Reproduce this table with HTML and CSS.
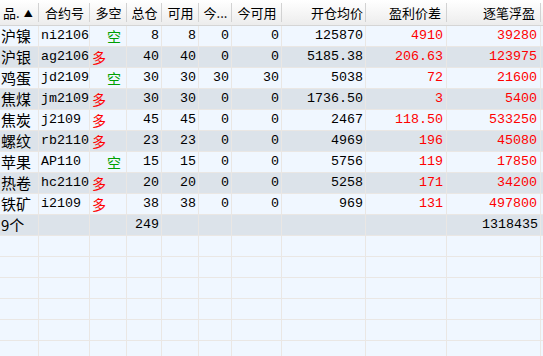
FILE: index.html
```html
<!DOCTYPE html>
<html lang="zh">
<head>
<meta charset="utf-8">
<link rel="stylesheet" href="styles.css">
</head>
<body>
<div class="grid">
  <div class="row head">
    <div class="h left">品.<span class="arrow">▲</span></div>
    <div class="h">合约号</div>
    <div class="h">多空</div>
    <div class="h">总仓</div>
    <div class="h">可用</div>
    <div class="h">今...</div>
    <div class="h">今可用</div>
    <div class="h right">开仓均价</div>
    <div class="h right pad">盈利价差</div>
    <div class="h right pad">逐笔浮盈</div>
    <div class="h end"></div>
  </div>

  <div class="row odd"><div class="c name">沪镍</div><div class="c code">ni2106</div><div class="c dir short">空</div><div class="c n">8</div><div class="c n">8</div><div class="c n">0</div><div class="c n">0</div><div class="c n">125870</div><div class="c n red">4910</div><div class="c n red">39280</div><div class="c end"></div></div>
  <div class="row even"><div class="c name">沪银</div><div class="c code">ag2106</div><div class="c dir long">多</div><div class="c n">40</div><div class="c n">40</div><div class="c n">0</div><div class="c n">0</div><div class="c n">5185.38</div><div class="c n red">206.63</div><div class="c n red">123975</div><div class="c end"></div></div>
  <div class="row odd"><div class="c name">鸡蛋</div><div class="c code">jd2109</div><div class="c dir short">空</div><div class="c n">30</div><div class="c n">30</div><div class="c n">30</div><div class="c n">30</div><div class="c n">5038</div><div class="c n red">72</div><div class="c n red">21600</div><div class="c end"></div></div>
  <div class="row even"><div class="c name">焦煤</div><div class="c code">jm2109</div><div class="c dir long">多</div><div class="c n">30</div><div class="c n">30</div><div class="c n">0</div><div class="c n">0</div><div class="c n">1736.50</div><div class="c n red">3</div><div class="c n red">5400</div><div class="c end"></div></div>
  <div class="row odd"><div class="c name">焦炭</div><div class="c code">j2109</div><div class="c dir long">多</div><div class="c n">45</div><div class="c n">45</div><div class="c n">0</div><div class="c n">0</div><div class="c n">2467</div><div class="c n red">118.50</div><div class="c n red">533250</div><div class="c end"></div></div>
  <div class="row even"><div class="c name">螺纹</div><div class="c code">rb2110</div><div class="c dir long">多</div><div class="c n">23</div><div class="c n">23</div><div class="c n">0</div><div class="c n">0</div><div class="c n">4969</div><div class="c n red">196</div><div class="c n red">45080</div><div class="c end"></div></div>
  <div class="row odd"><div class="c name">苹果</div><div class="c code">AP110</div><div class="c dir short">空</div><div class="c n">15</div><div class="c n">15</div><div class="c n">0</div><div class="c n">0</div><div class="c n">5756</div><div class="c n red">119</div><div class="c n red">17850</div><div class="c end"></div></div>
  <div class="row even"><div class="c name">热卷</div><div class="c code">hc2110</div><div class="c dir long">多</div><div class="c n">20</div><div class="c n">20</div><div class="c n">0</div><div class="c n">0</div><div class="c n">5258</div><div class="c n red">171</div><div class="c n red">34200</div><div class="c end"></div></div>
  <div class="row odd"><div class="c name">铁矿</div><div class="c code">i2109</div><div class="c dir long">多</div><div class="c n">38</div><div class="c n">38</div><div class="c n">0</div><div class="c n">0</div><div class="c n">969</div><div class="c n red">131</div><div class="c n red">497800</div><div class="c end"></div></div>
  <div class="row even"><div class="c name">9个</div><div class="c code"></div><div class="c dir"></div><div class="c n">249</div><div class="c n"></div><div class="c n"></div><div class="c n"></div><div class="c n"></div><div class="c n"></div><div class="c n">1318435</div><div class="c end"></div></div>

  <div class="row odd"><div class="c"></div><div class="c"></div><div class="c"></div><div class="c"></div><div class="c"></div><div class="c"></div><div class="c"></div><div class="c"></div><div class="c"></div><div class="c"></div><div class="c end"></div></div>
  <div class="row odd"><div class="c"></div><div class="c"></div><div class="c"></div><div class="c"></div><div class="c"></div><div class="c"></div><div class="c"></div><div class="c"></div><div class="c"></div><div class="c"></div><div class="c end"></div></div>
  <div class="row odd"><div class="c"></div><div class="c"></div><div class="c"></div><div class="c"></div><div class="c"></div><div class="c"></div><div class="c"></div><div class="c"></div><div class="c"></div><div class="c"></div><div class="c end"></div></div>
  <div class="row odd"><div class="c"></div><div class="c"></div><div class="c"></div><div class="c"></div><div class="c"></div><div class="c"></div><div class="c"></div><div class="c"></div><div class="c"></div><div class="c"></div><div class="c end"></div></div>
  <div class="row odd"><div class="c"></div><div class="c"></div><div class="c"></div><div class="c"></div><div class="c"></div><div class="c"></div><div class="c"></div><div class="c"></div><div class="c"></div><div class="c"></div><div class="c end"></div></div>
  <div class="row odd"><div class="c"></div><div class="c"></div><div class="c"></div><div class="c"></div><div class="c"></div><div class="c"></div><div class="c"></div><div class="c"></div><div class="c"></div><div class="c"></div><div class="c end"></div></div>
</div>
</body>
</html>
```

FILE: styles.css
```css
html, body {
  margin: 0;
  padding: 0;
  background: #f0f7ff;
  overflow: hidden;
}

.grid {
  width: 543px;
  height: 356px;
  overflow: hidden;
  background: #f0f7ff;
}

.row {
  display: grid;
  grid-template-columns: 39px 51px 37px 35px 37px 33px 50px 84px 81px 94px 2px;
}

.head {
  height: 26px;
  box-sizing: border-box;
  border-bottom: 1px solid #d5d5d5;
  background: linear-gradient(#ffffff, #f4f4f4 60%, #ececec);
  font-family: "Noto Sans CJK SC", "Noto Sans", sans-serif;
  font-size: 13px;
  color: #000;
}

.h {
  line-height: 25px;
  text-align: center;
  white-space: nowrap;
  overflow: hidden;
  background: linear-gradient(#d2d2d2, #d2d2d2) right 3px / 1px 19px no-repeat;
}

.h.left {
  text-align: left;
  padding-left: 3px;
}

.h.right {
  text-align: right;
  padding-right: 3px;
}

.h.right.pad {
  padding-right: 6px;
}

.h.end {
  background: none;
}

.arrow {
  font-size: 9px;
  margin-left: 4px;
  vertical-align: 1px;
}

.c {
  height: 21px;
  box-sizing: border-box;
  border-right: 1px solid #eae7e4;
  border-bottom: 1px solid #eae7e4;
  line-height: 20px;
  white-space: nowrap;
  overflow: hidden;
  font-family: "Liberation Mono", "Noto Sans CJK SC", monospace;
  font-size: 13.33px;
  color: #000;
}

.c.end {
  border-right: none;
}

.odd .c {
  background: #f0f7ff;
}

.even .c {
  background: #dce3ea;
}

.name {
  font-family: "Noto Sans CJK SC", sans-serif;
  font-size: 15px;
  padding-left: 1px;
}

.code {
  padding-left: 2px;
}

.dir {
  font-family: "Noto Sans CJK SC", sans-serif;
  font-size: 14px;
}

.dir.long {
  color: #ff0000;
  padding-left: 2px;
}

.dir.short {
  color: #00a000;
  padding-left: 17px;
}

.n {
  text-align: right;
  padding-right: 2px;
}

.n.red {
  color: #ff0000;
  padding-right: 3px;
}
```
